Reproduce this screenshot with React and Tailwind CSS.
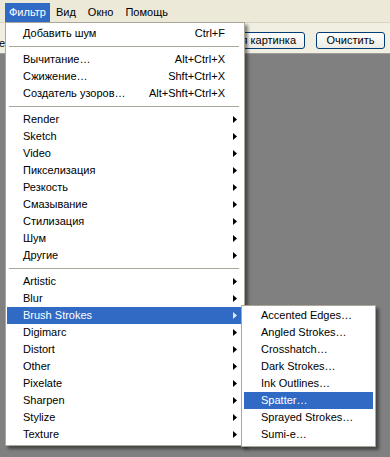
import React from 'react';

const font = { fontFamily: '"Liberation Sans", Arial, sans-serif' };

// black triangle used for submenu arrows
function Arrow({ white }) {
  return (
    <svg width="4" height="7" viewBox="0 0 4 7" className="shrink-0">
      <polygon points="0,0 4,3.5 0,7" fill={white ? '#dbe8ff' : '#000'} />
    </svg>
  );
}

function Item({ label, shortcut, sub, active }) {
  return (
    <div
      className={`h-[17px] flex items-center pl-[16px] pr-[4px] ${active ? 'bg-[#316ac5] text-white' : 'text-black'}`}
    >
      <span className="flex-1 whitespace-nowrap">{label}</span>
      {shortcut && <span className="whitespace-nowrap pr-[12px]">{shortcut}</span>}
      {sub && <Arrow white={active} />}
    </div>
  );
}

function Sep() {
  return (
    <div className="h-[9px] flex items-center px-[2px]">
      <div className="h-px w-full bg-[#aca899]" />
    </div>
  );
}

const groupA = ['Render', 'Sketch', 'Video', 'Пикселизация', 'Резкость', 'Смазывание', 'Стилизация', 'Шум', 'Другие'];
const groupB = ['Artistic', 'Blur', 'Brush Strokes', 'Digimarc', 'Distort', 'Other', 'Pixelate', 'Sharpen', 'Stylize', 'Texture'];
const strokes = ['Accented Edges…', 'Angled Strokes…', 'Crosshatch…', 'Dark Strokes…', 'Ink Outlines…', 'Spatter…', 'Sprayed Strokes…', 'Sumi-e…'];

export default function App() {
  return (
    <div className="w-[390px] h-[457px] relative overflow-hidden bg-[#808080] text-[11px] flex flex-col" style={font}>
      {/* menu bar */}
      <div className="h-[22px] bg-[#ece9d8] flex items-start pt-[3px] pl-[5px] text-black">
        <div className="h-[19px] px-[4px] flex items-center bg-[#316ac5] text-white">Фильтр</div>
        <div className="h-[19px] px-[6px] flex items-center">Вид</div>
        <div className="h-[19px] px-[6px] flex items-center">Окно</div>
        <div className="h-[19px] px-[6px] flex items-center">Помощь</div>
      </div>

      {/* toolbar */}
      <div className="h-[32px] bg-[#f1efe2] border-t border-[#d8d4c4] border-b border-b-[#9d9d9d] flex items-start pt-[9px]">
        <span className="ml-[-1px] mt-[3px] text-black">е</span>
        <div className="ml-auto flex gap-[11px] pr-[5px]">
          <div className="w-[106px] h-[17px] rounded-[3px] border border-[#003c74] bg-gradient-to-b from-white to-[#ecebe6] flex items-center justify-end pr-[8px] text-black whitespace-nowrap overflow-hidden">
            Исходная картинка
          </div>
          <div className="w-[69px] h-[17px] rounded-[3px] border border-[#003c74] bg-gradient-to-b from-white to-[#ecebe6] flex items-center justify-center text-black whitespace-nowrap overflow-hidden">
            Очистить
          </div>
        </div>
      </div>

      <div className="flex-1 bg-[#808080]" />

      {/* dropdown menu */}
      <div className="absolute left-[5px] top-[22px] w-[240px] bg-white border border-[#aca899] pl-[1px] pr-[3px] py-[2px] shadow-[3px_3px_3px_rgba(0,0,0,0.45)]">
        <Item label="Добавить шум" shortcut="Ctrl+F" />
        <Sep />
        <Item label="Вычитание…" shortcut="Alt+Ctrl+X" />
        <Item label="Сжижение…" shortcut="Shft+Ctrl+X" />
        <Item label="Создатель узоров…" shortcut="Alt+Shft+Ctrl+X" />
        <Sep />
        {groupA.map((l) => <Item key={l} label={l} sub />)}
        <Sep />
        {groupB.map((l) => <Item key={l} label={l} sub active={l === 'Brush Strokes'} />)}
      </div>

      {/* Brush Strokes submenu */}
      <div className="absolute left-[241px] top-[305px] w-[135px] bg-white border border-[#aca899] pl-[2px] pr-[2px] pt-[1px] pb-[3px] shadow-[3px_3px_3px_rgba(0,0,0,0.45)]">
        {strokes.map((l) => (
          <div
            key={l}
            className={`h-[17px] flex items-center pl-[17px] whitespace-nowrap ${l === 'Spatter…' ? 'bg-[#316ac5] text-white' : 'text-black'}`}
          >
            {l}
          </div>
        ))}
      </div>
    </div>
  );
}
